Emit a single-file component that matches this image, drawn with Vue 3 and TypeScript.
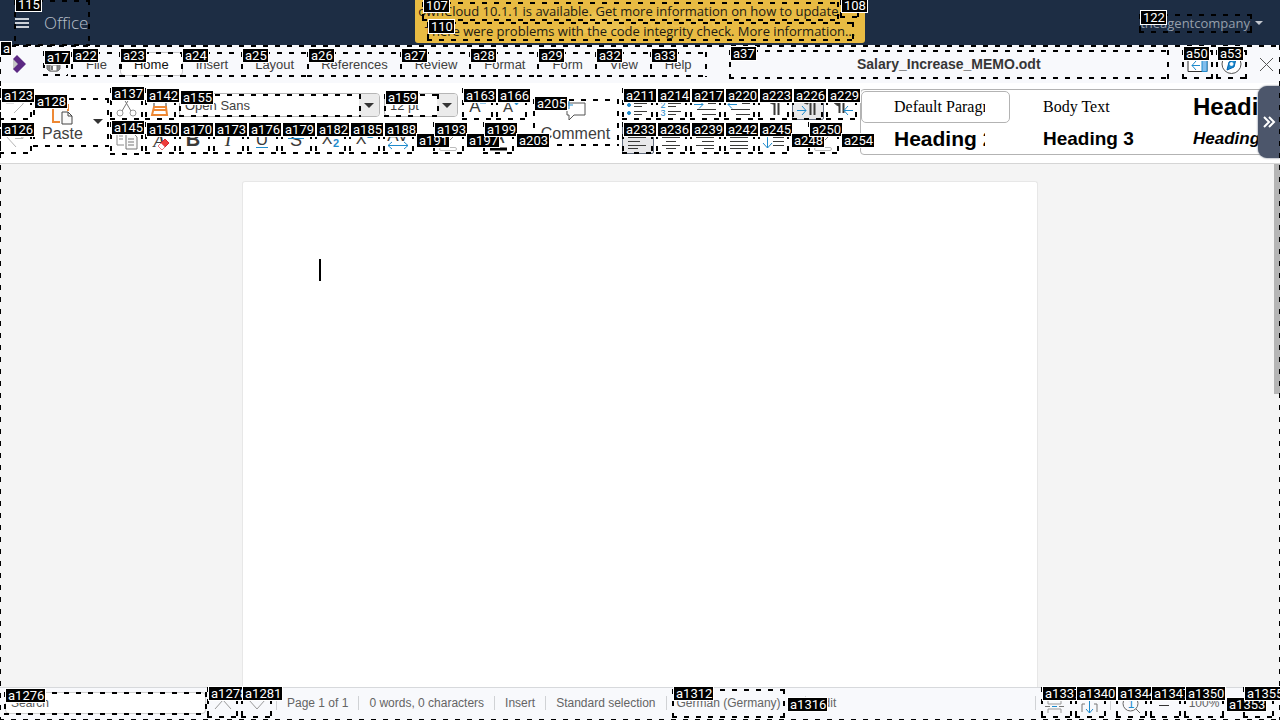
<script setup lang="ts">
import { h, ref } from 'vue'

interface Part { d?: string; c?: string; f?: string; w?: number; t?: string; x?: number; y?: number; s?: number; k?: string }
interface Mark { t: string; x: number; y: number; box?: [number, number, number, number] }

const ink = '#3a3a38'
const blue = '#1e8bcd'
const pilcrow = 'M12 1h9M12 1C4 1 4 12 12 12z'

const icons: Record<string, Part[]> = {
  undo: [{ d: 'M2 3v8h8M3 10C7 2 22 3 19 12L10 21', c: '#b5b5b5' }],
  redo: [{ d: 'M2 10L12 21M11 12.5h8V4M18 12C14 2 0 3 2 10', c: '#b5b5b5' }],
  cut: [{ d: 'M7 19L17 2M16 19L6 2', c: '#777' }, { d: 'M8 21a3 3 0 1 1-6 0a3 3 0 1 1 6 0M21 21a3 3 0 1 1-6 0a3 3 0 1 1 6 0', c: '#999' }],
  copy: [{ d: 'M9 19H2V3h7M4 10h4M4 13h4', c: '#888' }, { d: 'M11 7h7l4 4v12H11zM13 13h6M13 16h6M13 19h6', c: '#777', f: '#fafafa' }],
  clone: [{ d: 'M5 15V10h12v5', c: ink, f: '#fff' }, { d: 'M5 15h12l1 8H3z', c: '#ed8733', f: '#fff', w: 2 }, { d: 'M5 18h13', c: '#ed8733', w: 2 }],
  clear: [{ t: 'A', x: 10, y: 21, s: 19, k: 'serif italic' }, { d: 'M9 20l7-7 4 4-7 7z', c: '#d8242f', f: '#ed3d3b' }, { d: 'M9 20l3-3 4 4-3 3z', c: '#e87b80', f: '#fff' }],
  bold: [{ t: 'B', x: 10, y: 20, s: 20, k: 'bold' }],
  italic: [{ t: 'I', x: 11, y: 20, s: 20, k: 'serif italic' }],
  underline: [{ t: 'U', x: 11, y: 19, s: 17 }, { d: 'M5 21.5h12', c: blue }],
  strike: [{ t: 'S', x: 11, y: 20, s: 18 }, { d: 'M3 12.5h16', c: blue }],
  sub: [{ t: 'X', x: 8, y: 18, s: 16 }, { t: '2', x: 17, y: 21, s: 11, c: blue, k: 'bold' }],
  sup: [{ t: 'X', x: 8, y: 18, s: 16 }, { t: '2', x: 17, y: 12, s: 11, c: blue, k: 'bold' }],
  spacing: [{ t: 'AV', x: 11, y: 15, s: 17 }, { d: 'M1 19.5h20M5 16l-4 3.5 4 3.5M17 16l4 3.5-4 3.5', c: blue }],
  highlight: [{ d: 'M13 14l7-7M10 13l3 2', c: '#777' }, { d: 'M4 21.5h14a1.5 1.5 0 0 1 0 3H4a1.5 1.5 0 0 1 0-3', c: '#bbb', f: '#fff' }],
  color: [{ t: 'A', x: 11, y: 17, s: 19 }, { d: 'M3 23h17', c: '#000', w: 3 }],
  grow: [{ t: 'A', x: 9, y: 20, s: 17 }, { d: 'M14 11l3-4 3 4z', c: blue, f: blue }],
  shrink: [{ t: 'A', x: 8, y: 20, s: 15 }, { d: 'M14 10h5l-2.5 3z', c: blue, f: blue }],
  comment: [{ d: 'M4 3h18v12H11l-5 5v-5H4V7', c: '#555' }, { d: 'M6 1v8M2 5h8', c: blue }],
  bullets: [{ d: 'M8 3.5h13M8 11.5h13M8 14.5h8M8 19.5h13M8 22.5h8', c: ink }, { d: 'M4.500 13a1.500 1.500 0 1 1-3 0a1.500 1.500 0 1 1 3 0M4.500 21a1.500 1.500 0 1 1-3 0a1.500 1.500 0 1 1 3 0', c: blue, f: blue }],
  numbers: [{ d: 'M8 11.5h13M8 14.5h8M8 19.5h13M8 22.5h8', c: ink }, { t: '2', x: 3, y: 16, s: 9, c: blue }, { t: '3', x: 3, y: 24, s: 9, c: blue }],
  indent: [{ d: 'M14 11.5h8M3 17.5h19M8 22.5h14', c: ink }, { d: 'M0 12.5h9M5 8.500l4 4-4 4', c: blue }],
  outdent: [{ d: 'M14 11.5h8M3 17.5h19M8 22.5h14', c: ink }, { d: 'M9 12.5H0M4 8.500l-4 4 4 4', c: blue }],
  control: [{ d: pilcrow, c: ink, f: ink }, { d: 'M12.500 1v22M16.500 1v22', c: ink, w: 2 }],
  ltr: [{ d: pilcrow, c: ink, f: ink }, { d: 'M14.500 1v22M18.500 1v22', c: ink, w: 2 }, { d: 'M1 18.500h9M6 14l4 4.500-4 4.500', c: blue }],
  rtl: [{ d: 'M9 1h5M9 1C1 1 1 12 9 14z', c: ink, f: ink }, { d: 'M9.500 1v20M13.500 1v20', c: ink, w: 2 }, { d: 'M23 18.500h-9M18 14l-4 4.500 4 4.500', c: blue }],
  left: [{ d: 'M2 4.500h18M2 11.500h18M2 15.500h12M2 19.500h18M2 22.500h10', c: ink }],
  center: [{ d: 'M2 4.500h18M2 11.500h18M6 15.500h10M2 19.500h18M6 22.500h10', c: ink }],
  right: [{ d: 'M2 4.500h18M2 11.500h18M8 15.500h12M2 19.500h18M10 22.500h10', c: ink }],
  justify: [{ d: 'M2 4.500h18M2 11.500h18M2 15.500h18M2 19.500h18M2 22.500h18', c: ink }],
  line: [{ d: 'M11 11.500h11M11 15.500h11M11 19.500h11', c: ink }, { d: 'M5.500 3v19M1 17l4.500 5 4.500-5', c: blue }],
  sidebar: [{ d: 'M2 4.500h19v15H2z', c: '#333', f: '#fff' }, { d: 'M16 4.500h5v15h-5z', c: blue, f: '#83beec' }, { d: 'M14 13.500H6M10 9l-4 4.500L10 18', c: blue }],
  compass: [{ d: 'M21 12a9.500 9.500 0 1 1-19 0a9.500 9.500 0 1 1 19 0', c: '#555', f: '#fff' }, { d: 'M16 7l-2 8-7 3 2-8z', c: '#0063b1', f: '#1e8bcd' }, { d: 'M13 12a1.500 1.500 0 1 1-3 0a1.500 1.500 0 1 1 3 0', c: '#fff', f: '#fff' }],
  close: [{ d: 'M5 6l13 13M18 6L5 19', c: '#555' }],
  save: [{ d: 'M4 4h13v13l-2 2H6l-2-2z', c: '#777', f: '#888' }, { d: 'M7 13h7v6H7z', c: '#777', f: '#fff' }, { d: 'M9 14v4', c: '#777', w: 2 }],
  up: [{ d: 'M4 18l8-9 8 9', c: '#999' }],
  down: [{ d: 'M4 9l8 9 8-9', c: '#999' }],
  pageview: [{ d: 'M4 5v8h13V5M4 22v-4h13v4', c: '#999' }, { d: 'M1 15.500h5M15 15.500h5', c: '#777' }, { d: 'M8 15.500h5', c: blue }],
  fit: [{ d: 'M7 13H4v8M16 13h3v8', c: '#777' }, { d: 'M11.500 6v16M8 18l3.500 4 3.500-4', c: blue }],
  zoomreset: [{ d: 'M19 12.500a7.500 7.500 0 1 1-15 0a7.500 7.500 0 1 1 15 0M17 18l4 4', c: '#666' }, { t: '1', x: 12, y: 17, s: 12, c: blue }],
  minus: [{ d: 'M6 14.500h10', c: '#333' }],
  plus: [{ d: 'M6 14.500h10M11 10v9', c: '#333' }],
  pasteicon: [{ d: 'M10 22H3V5h15v6', c: '#ed8733', f: '#fbfbfb', w: 2 }, { d: 'M7 3h7v4H7z', c: '#888', f: '#fff' }, { d: 'M12 12h6l4 4v8H12zM18 12v4h4', c: '#444', f: '#fafafa' }]
}

const tabs = ['File', 'Home', 'Insert', 'Layout', 'References', 'Review', 'Format', 'Form', 'View', 'Help']
const activeTab = ref('Home')
const title = ref('Salary_Increase_MEMO.odt')
const columns = [['undo', 'redo'], ['cut', 'copy'], ['clone', 'clear']]
const styleNames = ['bold', 'italic', 'underline', 'strike', 'sub', 'sup', 'spacing']
const listTop = ['bullets', 'numbers', 'indent', 'outdent', 'control', 'ltr', 'rtl']
const listBottom = ['left', 'center', 'right', 'justify', 'line']
const gallery = [
  ['Default Paragraph Style', 'serif'], ['Body Text', 'serif'], ['Heading 1', 'h1'],
  ['Heading 2', 'h2'], ['Heading 3', 'h3'], ['Heading 4', 'h4']
]
const facts = ['Page 1 of 1', '0 words, 0 characters', 'Insert', 'Standard selection']

const row = (tags: string[], x: number, y: number, height: number, ly: number): Mark[] =>
  tags.map((t, i) => ({ t, x: x + 2 + i * 34, y: ly, box: [x + i * 34, y, 31, height] }))

const marks: Mark[] = [
  { t: '115', x: 16, y: -2, box: [14, 0, 76, 46] },
  { t: 'a', x: 1, y: 42, box: [-1, 45, 1282, 676] },
  { t: '107', x: 424, y: -1, box: [422, 2, 417, 19] },
  { t: '108', x: 842, y: -1, box: [840, 0, 19, 18] },
  { t: '110', x: 429, y: 20, box: [427, 22, 427, 19] },
  { t: '122', x: 1141, y: 11, box: [1139, 14, 113, 19] },
  { t: 'a17', x: 45, y: 51, box: [43, 51, 25, 25] },
  { t: 'a22', x: 73, y: 49, box: [71, 52, 50, 25] },
  { t: 'a23', x: 121, y: 49, box: [120, 52, 63, 25] },
  { t: 'a24', x: 183, y: 49, box: [181, 52, 62, 25] },
  { t: 'a25', x: 243, y: 49, box: [241, 52, 68, 25] },
  { t: 'a26', x: 309, y: 49, box: [307, 52, 95, 25] },
  { t: 'a27', x: 402, y: 49, box: [400, 52, 71, 25] },
  { t: 'a28', x: 471, y: 49, box: [469, 52, 70, 25] },
  { t: 'a29', x: 539, y: 49, box: [537, 52, 60, 25] },
  { t: 'a32', x: 597, y: 49, box: [595, 52, 57, 25] },
  { t: 'a33', x: 652, y: 49, box: [650, 52, 57, 25] },
  { t: 'a37', x: 731, y: 47, box: [729, 50, 440, 29] },
  { t: 'a50', x: 1184, y: 47, box: [1182, 50, 31, 29] },
  { t: 'a53', x: 1218, y: 47, box: [1216, 50, 31, 29] },
  { t: 'a123', x: 2, y: 89, box: [-1, 88, 33, 32] },
  { t: 'a126', x: 2, y: 123, box: [-1, 122, 33, 32] },
  { t: 'a128', x: 35, y: 95, box: [33, 98, 76, 49] },
  { t: 'a137', x: 112, y: 87, box: [110, 88, 33, 32] },
  { t: 'a145', x: 112, y: 121, box: [110, 122, 33, 33] },
  { t: 'a142', x: 147, y: 89, box: [145, 88, 31, 32] },
  { t: 'a150', x: 147, y: 123, box: [145, 122, 31, 32] },
  { t: 'a155', x: 181, y: 91, box: [179, 94, 182, 23] },
  { t: 'a159', x: 386, y: 91, box: [384, 94, 55, 23] },
  ...row(['a163', 'a166'], 462, 88, 32, 89),
  ...row(['a170', 'a173', 'a176', 'a179', 'a182', 'a185', 'a188'], 179, 122, 32, 123),
  { t: 'a191', x: 417, y: 134 },
  ...row(['a193'], 433, 122, 32, 123),
  { t: 'a197', x: 467, y: 134 },
  ...row(['a199'], 483, 122, 32, 123),
  { t: 'a203', x: 517, y: 134 },
  { t: 'a205', x: 535, y: 97, box: [533, 99, 86, 47] },
  ...row(['a211', 'a214', 'a217', 'a220', 'a223', 'a226', 'a229'], 622, 88, 32, 89),
  ...row(['a233', 'a236', 'a239', 'a242', 'a245'], 622, 122, 32, 123),
  { t: 'a248', x: 792, y: 134 },
  ...row(['a250'], 808, 122, 32, 123),
  { t: 'a254', x: 842, y: 134 },
  { t: 'a1276', x: 6, y: 689, box: [4, 692, 203, 23] },
  ...row(['a1278', 'a1281'], 207, 687, 31, 687),
  { t: 'a1312', x: 674, y: 687, box: [672, 689, 113, 29] },
  { t: 'a1316', x: 788, y: 698 },
  ...row(['a1337', 'a1340'], 1041, 687, 31, 687),
  ...row(['a1344', 'a1347'], 1116, 687, 31, 687),
  { t: 'a1350', x: 1186, y: 687, box: [1184, 687, 40, 31] },
  { t: 'a1353', x: 1227, y: 698 },
  ...row(['a1355'], 1243, 687, 31, 687)
]
const boxes = marks.filter(m => m.box)
const boxStyle = (m: Mark) => ({ left: `${m.box![0]}px`, top: `${m.box![1]}px`, width: `${m.box![2]}px`, height: `${m.box![3]}px` })

const Icon = (props: { name: string }) => h(
  'svg',
  { viewBox: '0 0 24 24', width: 24, height: 24, 'aria-hidden': 'true', class: 'icon' },
  icons[props.name].map(p => p.t
    ? h('text', {
        x: p.x, y: p.y, fill: p.c ?? ink, 'text-anchor': 'middle', 'font-size': p.s,
        'font-family': p.k?.includes('serif') ? 'Liberation Serif, serif' : 'Liberation Sans, sans-serif',
        'font-weight': p.k?.includes('bold') ? 'bold' : 'normal',
        'font-style': p.k?.includes('italic') ? 'italic' : 'normal'
      }, p.t)
    : h('path', { d: p.d, stroke: p.c, fill: p.f ?? 'none', 'stroke-width': p.w ?? 1 }))
)
Icon.props = ['name']
</script>

<template>
  <div class="office">
    <header class="top">
      <button class="apps"><span class="burger"></span>Office</button>
      <div class="notice">
        <svg class="cloud" viewBox="0 0 140 40" aria-hidden="true">
          <path d="M2 27a8 8 0 0 1 10-8a14 14 0 0 1 26-5a10 10 0 0 1 10 16H8z" />
          <text x="54" y="24">ownCloud</text>
        </svg>
        <a href="#update">ownCloud 10.1.1 is available. Get more information on how to update.</a>
        <a href="#integrity">There were problems with the code integrity check. More information…</a>
      </div>
      <button class="user">theagentcompany<i class="caret"></i></button>
    </header>

    <nav class="menu">
      <a class="logo" href="#home" aria-label="Home page">
        <svg viewBox="0 0 16 20" width="16" height="20"><path d="M1 5l6 5-6 6z" fill="#c4c4c4" /><path d="M5 1l9 9-9 9-4-4 5-5-5-5z" fill="#5c2983" /></svg>
      </a>
      <button class="save" aria-label="Save"><Icon name="save" /></button>
      <div class="tabs">
        <button v-for="t in tabs" :key="t" :class="{ on: t === activeTab }" @click="activeTab = t">{{ t }}</button>
      </div>
      <input v-model="title" class="title" aria-label="Document name">
      <div class="menu-end">
        <button aria-label="Sidebar"><Icon name="sidebar" /></button>
        <button aria-label="Navigator"><Icon name="compass" /></button>
        <button aria-label="Close"><Icon name="close" /></button>
      </div>
    </nav>

    <section class="tools">
      <div class="col"><button v-for="n in columns[0]" :key="n" class="tool" :aria-label="n"><Icon :name="n" /></button></div>
      <button class="big paste">
        <span class="stack"><Icon name="pasteicon" />Paste</span><i class="caret"></i>
      </button>
      <div v-for="c in columns.slice(1)" :key="c[0]" class="col">
        <button v-for="n in c" :key="n" class="tool" :aria-label="n"><Icon :name="n" /></button>
      </div>
      <div class="col fonts">
        <div class="line combos">
          <div class="combo family"><select aria-label="Font name"><option>Open Sans</option></select><span><i class="caret"></i></span></div>
          <div class="combo size"><select aria-label="Font size"><option>12 pt</option></select><span><i class="caret"></i></span></div>
          <button class="tool" aria-label="grow"><Icon name="grow" /></button>
          <button class="tool" aria-label="shrink"><Icon name="shrink" /></button>
        </div>
        <div class="line">
          <button v-for="n in styleNames" :key="n" class="tool" :aria-label="n"><Icon :name="n" /></button>
          <button class="drop" aria-label="Spacing options"><i class="caret"></i></button>
          <button class="tool" aria-label="Highlight"><Icon name="highlight" /></button>
          <button class="drop" aria-label="Highlight options"><i class="caret"></i></button>
          <button class="tool" aria-label="Font color"><Icon name="color" /></button>
          <button class="drop" aria-label="Color options"><i class="caret"></i></button>
        </div>
      </div>
      <button class="big comment"><span class="stack"><Icon name="comment" />Comment</span></button>
      <div class="col lists">
        <div class="line">
          <button v-for="n in listTop" :key="n" class="tool" :class="{ on: n === 'ltr' }" :aria-label="n"><Icon :name="n" /></button>
        </div>
        <div class="line">
          <button v-for="n in listBottom" :key="n" class="tool" :class="{ on: n === 'left' }" :aria-label="n"><Icon :name="n" /></button>
          <button class="drop" aria-label="Line spacing options"><i class="caret"></i></button>
          <button class="tool" aria-label="Background"><Icon name="highlight" /></button>
        </div>
      </div>
      <div class="gallery">
        <button v-for="(g, i) in gallery" :key="g[0]" :class="[g[1], { on: i === 0 }]"><span>{{ g[0] }}</span></button>
      </div>
      <button class="more" aria-label="Scroll right">
        <svg viewBox="0 0 14 12" width="14" height="12"><path d="M2 1l5 5-5 5M7 1l5 5-5 5" /></svg>
      </button>
    </section>

    <main class="canvas">
      <article class="page"><div class="cursor"></div></article>
      <div class="scrollbar"></div>
    </main>

    <footer class="status">
      <input class="search" type="search" placeholder="Search" aria-label="Search">
      <button class="tool" aria-label="Previous"><Icon name="up" /></button>
      <button class="tool" aria-label="Next"><Icon name="down" /></button>
      <span v-for="f in facts" :key="f" class="fact">{{ f }}</span>
      <button class="fact lang">German (Germany)</button>
      <span class="fact">Edit</span>
      <div class="zoom">
        <button class="tool" aria-label="Page view"><Icon name="pageview" /></button>
        <button class="tool" aria-label="Fit"><Icon name="fit" /></button>
        <i class="rule"></i>
        <button class="tool" aria-label="Reset zoom"><Icon name="zoomreset" /></button>
        <button class="tool" aria-label="Zoom out"><Icon name="minus" /></button>
        <button class="percent">100%</button>
        <button class="tool" aria-label="Zoom in"><Icon name="plus" /></button>
      </div>
    </footer>

    <div class="marks">
      <div v-for="m in boxes" :key="'b' + m.t" class="box" :style="boxStyle(m)"></div>
      <span v-for="m in marks" :key="m.t" class="tag" :style="{ left: `${m.x}px`, top: `${m.y}px` }">{{ m.t }}</span>
    </div>
  </div>
</template>

<style>
body { margin: 0; overflow: hidden; }
.icon { display: block; overflow: visible; }
</style>

<style scoped>
* { box-sizing: border-box; }
.office { position: relative; display: flex; flex-direction: column; height: 100vh; overflow: hidden; background: #fff; color: #3f3f3f; font-family: "Liberation Sans", Arial, sans-serif; font-size: 13px; }
button, input, select { font: inherit; color: inherit; border: 0; padding: 0; margin: 0; background: none; }
button { cursor: pointer; }
svg { display: block; flex: none; }
.caret { display: block; width: 0; height: 0; border: 5px solid transparent; border-top-color: #333; border-bottom-width: 0; }
.top { position: relative; display: flex; flex: none; justify-content: space-between; align-items: center; height: 45px; padding: 0 17px 0 15px; background: #1d2d44; font-family: "Open Sans", sans-serif; }
.apps { display: flex; align-items: center; gap: 15px; color: #b7bfc9; font-size: 17px; font-weight: 300; line-height: 24px; }
.burger { width: 14px; height: 10px; border-top: 2px solid #ccd1d8; border-bottom: 2px solid #ccd1d8; background: linear-gradient(#ccd1d8, #ccd1d8) center / 100% 2px no-repeat; }
.notice { position: absolute; top: 0; left: 50%; width: 450px; height: 43px; padding-top: 1px; transform: translateX(-50%); border-radius: 0 0 3px 3px; background: #e8bb43; text-align: center; }
.notice a { position: relative; display: block; line-height: 20px; color: #1b1a14; text-decoration: none; white-space: nowrap; font-size: 13px; }
.notice a:first-of-type { margin-right: 20px; }
.cloud { position: absolute; left: 160px; top: 3px; width: 140px; height: 40px; fill: #ecc24f; font-size: 20px; }
.user { display: flex; align-items: center; gap: 5px; color: #969fab; font-size: 13px; line-height: 20px; }
.user .caret { border-width: 4px 4px 0; border-top-color: #c3c8cf; }
.menu { display: flex; flex: none; align-items: center; height: 38px; background: #f8f9fc; }
.logo { display: block; width: 43px; padding-left: 12px; }
.save { width: 25px; margin-right: 4px; }
.tabs { display: flex; height: 24px; }
.tabs button { margin-right: -1px; padding: 0 13px; border: 1px solid transparent; border-radius: 4px; }
.tabs .on { background: #fff; border-color: #c9c9cb; color: #111; }
.title { flex: 1; min-width: 0; margin: 0 13px 0 24px; height: 29px; text-align: center; font-size: 14px; font-weight: bold; color: #363636; }
.menu-end { display: flex; gap: 3px; }
.menu-end button { display: grid; place-items: center; width: 31px; height: 29px; }
.menu-end button:last-child { margin-left: 4px; width: 26px; }
.tools { position: relative; display: flex; flex: none; gap: 2px; height: 81px; padding-top: 5px; border-bottom: 1px solid #d5d5d5; overflow: hidden; }
.col { display: flex; flex: none; flex-direction: column; gap: 2px; }
.line { display: flex; gap: 2px; height: 32px; align-items: center; }
.tool { display: grid; place-items: center start; flex: none; width: 32px; height: 32px; padding-left: 4px; }
.tool.on { border: 1px solid #646e80; border-radius: 2px; background: #e8e8ea; padding-left: 3px; }
.drop { display: grid; place-items: center; width: 14px; height: 32px; }
.fonts { width: 352px; }
.combos { gap: 4px; }
.combos .tool + .tool { margin-left: -2px; }
.combo { display: flex; height: 24px; margin-top: 2px; border: 1px solid #b6b6b6; border-radius: 4px; overflow: hidden; background: #fff; }
.combo select { flex: 1; min-width: 0; appearance: none; padding-left: 5px; }
.combo span { display: grid; place-items: center; width: 20px; background: #ebebeb; }
.family { width: 201px; }
.size { width: 74px; }
.big { display: flex; flex: none; align-items: center; height: 49px; margin-top: 9px; font-size: 16px; line-height: 20px; }
.stack { display: flex; flex-direction: column; align-items: center; }
.paste { width: 75px; padding-left: 8px; gap: 10px; }
.comment { width: 85px; margin-right: 1px; justify-content: center; }
.lists { width: 236px; margin-left: 1px; }
.gallery { display: grid; grid-template-columns: 149px 150px 150px; grid-template-rows: 32px 32px; flex: 1; min-width: 0; height: 66px; margin-top: 1px; padding-top: 1px; border: 1px solid #b3b3b3; border-radius: 4px; overflow: hidden; }
.gallery button { border: 1px solid transparent; border-radius: 5px; text-align: left; padding: 0 24px 0 32px; color: #000; }
.gallery button.on { border-color: #b3b3b3; }
.gallery span { display: block; overflow: hidden; white-space: nowrap; line-height: 28px; }
.gallery .serif { font-family: "Liberation Serif", serif; font-size: 16px; }
.gallery .h1, .gallery .h2, .gallery .h3, .gallery .h4 { font-weight: bold; }
.gallery .h1 { font-size: 24px; }
.gallery .h2 { font-size: 21px; }
.gallery .h3 { font-size: 19px; }
.gallery .h4 { font-size: 17px; font-style: italic; }
.more { position: absolute; right: 0; top: 3px; display: grid; place-items: center; width: 22px; height: 72px; border-radius: 9px 0 0 9px; background: #4c566b; box-shadow: 0 0 2px #4c566b; }
.more path { fill: none; stroke: #fff; stroke-width: 2; }
.canvas { position: relative; display: flex; flex: 1; min-height: 0; justify-content: center; background: #f4f4f4; }
.page { width: 796px; margin-top: 17px; padding: 77px 76px 0; border: 1px solid #e7e7e7; border-bottom: 0; border-radius: 3px 3px 0 0; background: #fff; }
.cursor { width: 2px; height: 22px; background: #000; }
.scrollbar { position: absolute; right: 0; top: 0; width: 6px; height: 230px; background: #b5b5b5; }
.status { display: flex; flex: none; align-items: center; height: 33px; padding-bottom: 2px; border-top: 1px solid #d7d9dc; background: #f8f9fc; font-size: 12px; color: #646464; white-space: nowrap; }
.search { width: 201px; height: 22px; margin: 0 2px 0 5px; padding: 0 5px; border: 1px solid #d2d2d2; border-radius: 4px; background: #fff; }
.search::placeholder { color: #555; opacity: 1; }
.status .tool { margin-right: 2px; padding-left: 3px; height: 30px; }
.status .fact { height: 14px; line-height: 14px; padding: 0 10px; border-left: 1px solid #d0d2d5; }
.status .lang { margin-right: 14px; }
.zoom { display: flex; align-items: center; margin-left: auto; padding: 0 3px 0 5px; border-left: 1px solid #d0d2d5; height: 14px; }
.rule { width: 1px; height: 14px; margin: 0 5px 0 1px; background: #d0d2d5; }
.percent { width: 40px; margin-right: 19px; }
.marks { position: absolute; inset: 0; overflow: hidden; pointer-events: none; }
.box {
  position: absolute;
  background:
    repeating-linear-gradient(90deg, #000 0 5px, transparent 5px 12px) top / 100% 2px no-repeat,
    repeating-linear-gradient(90deg, #000 0 5px, transparent 5px 12px) bottom / 100% 2px no-repeat,
    repeating-linear-gradient(#000 0 5px, transparent 5px 12px) left / 2px 100% no-repeat,
    repeating-linear-gradient(#000 0 5px, transparent 5px 12px) right / 2px 100% no-repeat;
}
.tag { position: absolute; padding: 0 1px 0 2px; outline: 1px solid #fff; background: #000; color: #fff; font: 13px/13px Roboto, sans-serif; white-space: nowrap; }
</style>
